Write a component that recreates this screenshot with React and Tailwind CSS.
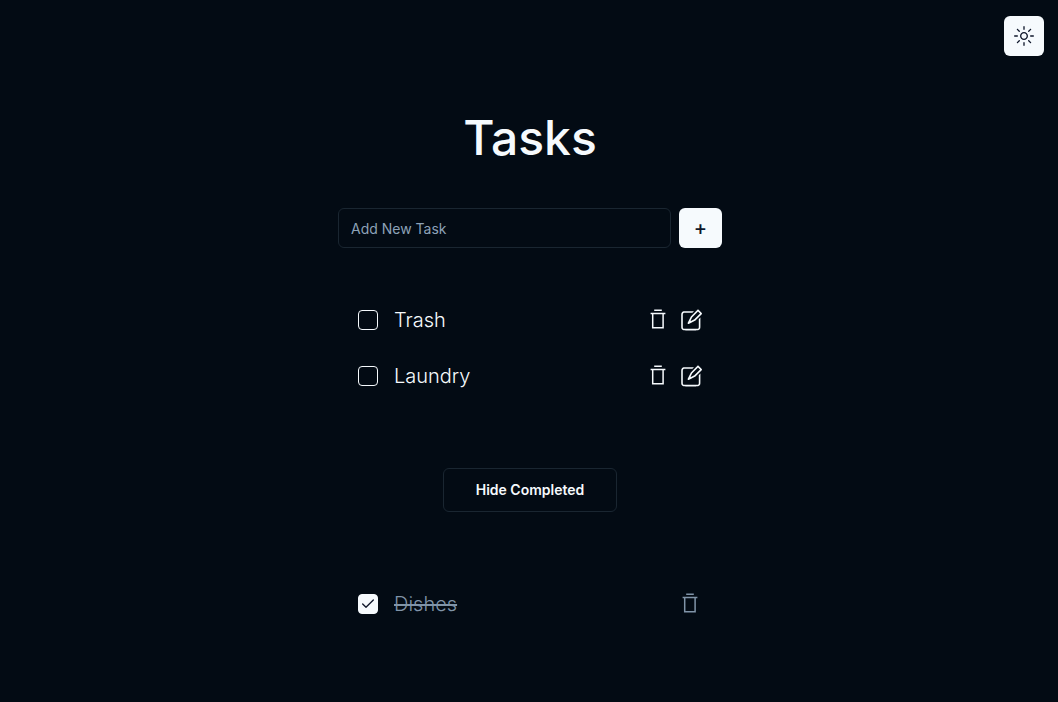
import { useState } from "react";
import { Check } from "lucide-react";
import { RxPencil2, RxSun } from "react-icons/rx";

function TrashIcon() {
  return (
    <svg width="24" height="24" viewBox="0 0 24 24" fill="none" stroke="currentColor" strokeWidth="1.5" aria-hidden="true">
      <path d="M8.2 2.3h7.6M4.6 5.6h14.8M6.7 5.6v14.2h10.4V5.6" />
    </svg>
  );
}

function Task({ task, onToggle, onDelete }) {
  const id = `task-${task.id}`;
  return (
    <li className="flex h-8 items-center gap-4">
      <span className="relative flex size-5 shrink-0">
        <input
          id={id}
          type="checkbox"
          checked={task.done}
          onChange={onToggle}
          className="size-5 appearance-none rounded border border-[#f6fafd] checked:bg-[#f6fafd]"
        />
        {task.done && <Check className="pointer-events-none absolute left-0.5 top-0.5 size-4 text-slate-900" />}
      </span>
      <label
        htmlFor={id}
        className={`grow text-xl font-light ${task.done ? "text-[#8094a8] line-through" : "text-[#f6fafd]"}`}
      >
        {task.title}
      </label>
      <div className={`flex items-center ${task.done ? "text-[#8094a8]" : "gap-2 text-[#f6fafd]"}`}>
        <button type="button" aria-label={`Delete ${task.title}`} onClick={onDelete}>
          <TrashIcon />
        </button>
        {!task.done && (
          <button type="button" aria-label={`Edit ${task.title}`}>
            <RxPencil2 className="size-6" />
          </button>
        )}
      </div>
    </li>
  );
}

export default function App() {
  const [tasks, setTasks] = useState([
    { id: 1, title: "Trash", done: false },
    { id: 2, title: "Laundry", done: false },
    { id: 3, title: "Dishes", done: true },
  ]);
  const [text, setText] = useState("");
  const [showDone, setShowDone] = useState(true);

  const addTask = (event) => {
    event.preventDefault();
    if (!text.trim()) return;
    setTasks([...tasks, { id: Date.now(), title: text.trim(), done: false }]);
    setText("");
  };
  const list = (done) => (
    <ul className="flex flex-col gap-6 px-5">
      {tasks
        .filter((t) => t.done === done)
        .map((t) => (
          <Task
            key={t.id}
            task={t}
            onToggle={() => setTasks(tasks.map((o) => (o.id === t.id ? { ...o, done: !o.done } : o)))}
            onDelete={() => setTasks(tasks.filter((o) => o.id !== t.id))}
          />
        ))}
    </ul>
  );

  return (
    <div className="min-h-screen bg-[#030b14] font-['Inter',sans-serif] text-[#f6fafd]">
      <header className="flex justify-end px-3.5 pt-4">
        <button
          type="button"
          aria-label="Toggle theme"
          className="flex size-10 items-center justify-center rounded-md bg-[#f6fafd] text-slate-900"
        >
          <RxSun className="size-5" />
        </button>
      </header>
      <main className="mx-auto box-content w-96 max-w-full pb-20 pl-0.5 pt-14">
        <h1 className="pt-0.5 text-center text-5xl font-medium">Tasks</h1>
        <form onSubmit={addTask} className="mt-[46px] flex gap-2">
          <input
            aria-label="Add New Task"
            placeholder="Add New Task"
            value={text}
            onChange={(e) => setText(e.target.value)}
            className="h-10 min-w-0 grow rounded-md border border-[#1a2631] px-3 text-sm placeholder:text-[#8da2b8]"
          />
          <button type="submit" aria-label="Add task" className="h-10 w-[43px] rounded-md bg-[#f6fafd] text-xl font-medium text-slate-900">
            +
          </button>
        </form>
        <div className="mt-14">{list(false)}</div>
        <div className="my-19 flex justify-center">
          <button
            type="button"
            onClick={() => setShowDone(!showDone)}
            className="h-11 rounded-md border border-[#1a2631] px-8 text-sm font-semibold"
          >
            {showDone ? "Hide Completed" : "Show Completed"}
          </button>
        </div>
        {showDone && list(true)}
      </main>
    </div>
  );
}
